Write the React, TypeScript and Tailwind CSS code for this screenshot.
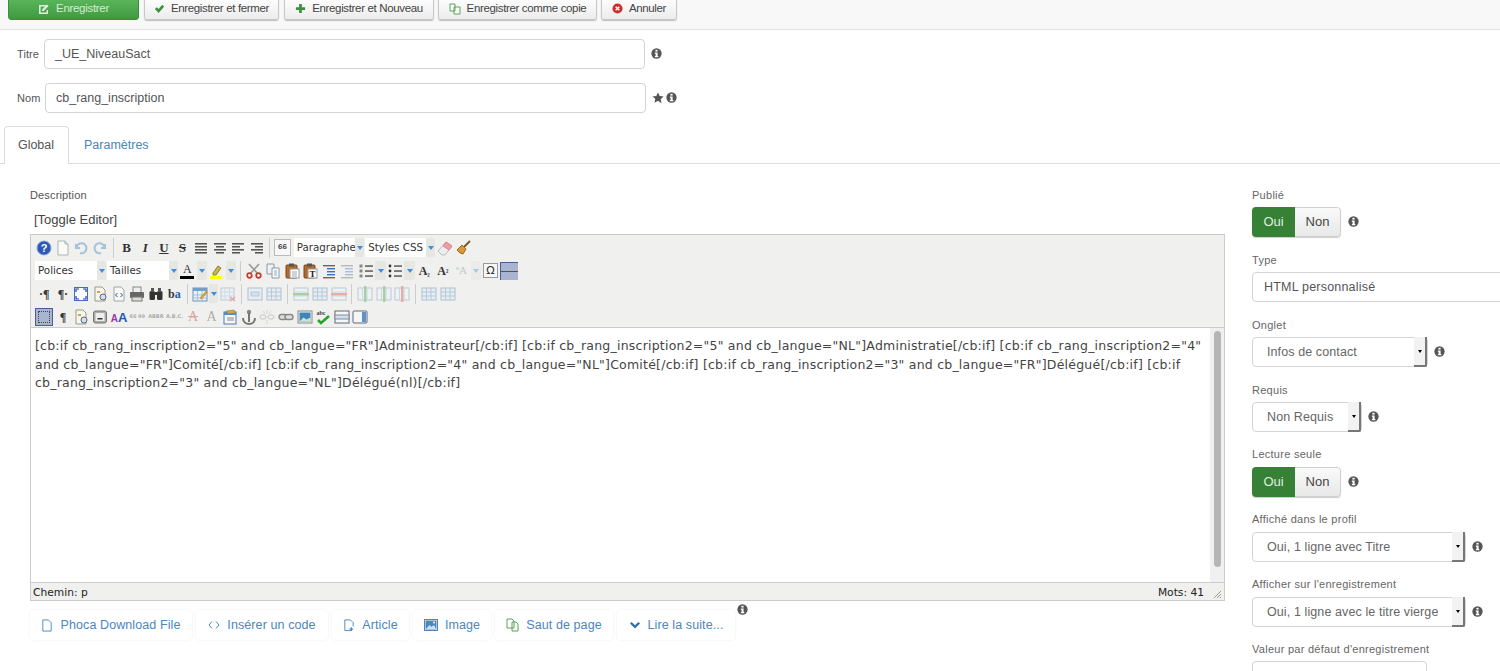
import React from "react";

const F = "[font-family:'Liberation_Sans',Arial,sans-serif]";

function Info({ className = "" }: { className?: string }) {
  return (
    <svg viewBox="0 0 12 12" className={`w-[11px] h-[11px] shrink-0 ${className}`}>
      <circle cx="6" cy="6" r="5.6" fill="#555" />
      <rect x="4.8" y="2" width="2.4" height="1.9" fill="#fff" />
      <path d="M4.2 5h3v3.6h.8V10H4.2V8.6H5V6.3h-.8z" fill="#fff" />
    </svg>
  );
}

function Btn({ icon, label, w }: { icon: React.ReactNode; label: string; w: string }) {
  return (
    <div className={`${w} h-[23px] flex items-center justify-center gap-[6px] rounded-[3px] border border-[#c8c8c8] bg-gradient-to-b from-[#fefefe] to-[#ececec] shadow-[0_1px_1px_#bbb] text-[11.5px] tracking-[-0.35px] text-[#444] whitespace-nowrap`}>
      {icon}
      <span>{label}</span>
    </div>
  );
}

function TextBox({ value, className }: { value: string; className: string }) {
  return (
    <div className={`${className} h-[30px] flex items-center rounded-[4px] border border-[#d4d4d4] bg-white pl-[10px] pt-[1px] text-[12.5px] text-[#555] whitespace-nowrap`}>
      {value}
    </div>
  );
}

function Label({ children }: { children: React.ReactNode }) {
  return <div className="h-[12px] leading-[12px] text-[11px] text-[#666] tracking-[0.27px] whitespace-nowrap">{children}</div>;
}

function Toggle({ on }: { on: string }) {
  return (
    <div className="flex items-center gap-[7px]">
      <div className="flex h-[30px] w-[89px] rounded-[4px] overflow-hidden text-[13px] shadow-[0_1px_1px_#ccc]">
        <div className="w-[43px] flex items-center justify-center bg-[#378137] text-[#dfeedf]">{on}</div>
        <div className="flex-1 flex items-center justify-center border border-l-0 border-[#d0d0d0] rounded-r-[4px] bg-gradient-to-b from-[#fafafa] to-[#e8e8e8] text-[#444]">Non</div>
      </div>
      <Info className="-mt-[1px]" />
    </div>
  );
}

function SelectBox({ value, w }: { value: string; w: string }) {
  return (
    <div className="flex items-center gap-[6px]">
      <div className={`${w} h-[30px] flex rounded-[4px] border border-[#d4d4d4] bg-white`}>
        <div className="flex-1 flex items-center pl-[14px] text-[12.5px] tracking-[0.1px] text-[#666] whitespace-nowrap overflow-hidden">{value}</div>
        <div className="w-[13px] -my-px flex items-center justify-center bg-[#f2f2f2] border-r-2 border-b-2 border-[#777] rounded-br-[2px]">
          <div className="w-0 h-0 border-x-[2.5px] border-x-transparent border-t-[3px] border-t-black" />
        </div>
      </div>
      <Info className="-mt-[1px]" />
    </div>
  );
}

function Ico({ k }: { k: string }) {
  const dim = "opacity-40";
  const line = (x: number, y: number, w: number, c = "#555") => <rect key={`${x}-${y}`} x={x} y={y} width={w} height="1" fill={c} />;
  switch (k) {
    case "help":
      return (
        <svg viewBox="0 0 16 16" className="w-[16px] h-[16px]">
          <circle cx="8" cy="8" r="7" fill="#2f58b5" stroke="#8aa4dc" />
          <text x="8" y="12" textAnchor="middle" fontSize="11" fontWeight="700" fill="#fff" fontFamily="Liberation Sans">?</text>
        </svg>
      );
    case "new":
      return <svg viewBox="0 0 16 16" className="w-[16px] h-[16px]"><path d="M3 1h7l3 3v11H3z" fill="#fbfbf6" stroke="#aab2b2" /><path d="M10 1v3h3" fill="#dde" stroke="#aab2b2" /></svg>;
    case "undo":
    case "redo":
      return (
        <svg viewBox="0 0 16 16" className={`w-[16px] h-[16px] ${dim} ${k === "redo" ? "-scale-x-100" : ""}`}>
          <path d="M3 4v4h4M3.5 8A5 5 0 1 1 7 13" fill="none" stroke="#3d80b5" strokeWidth="2" />
        </svg>
      );
    case "B":
    case "I":
    case "U":
    case "S":
      return (
        <span className={`w-[16px] text-center text-[13px] leading-none text-[#333] [font-family:'Liberation_Serif',serif] font-bold ${k === "I" ? "italic" : ""} ${k === "U" ? "underline" : ""} ${k === "S" ? "line-through" : ""}`}>{k}</span>
      );
    case "aj":
    case "ac":
    case "al":
    case "ar": {
      const xs: Record<string, number[][]> = {
        aj: [[2, 12], [2, 12], [2, 12], [2, 12]],
        ac: [[2, 12], [4, 8], [2, 12], [4, 8]],
        al: [[2, 12], [2, 8], [2, 12], [2, 8]],
        ar: [[2, 12], [6, 8], [2, 12], [6, 8]],
      };
      return <svg viewBox="0 0 16 16" className="w-[16px] h-[16px]">{xs[k].map((a, i) => <g key={i}>{line(a[0], 3 + i * 3, a[1])}{line(a[0], 4 + i * 3, a[1], "#999")}</g>)}</svg>;
    }
    case "quote":
      return <div className="w-[17px] h-[17px] flex items-center justify-center border border-[#bbb] bg-[#f8f8f8] text-[8px] font-bold leading-none text-[#444] pb-[2px] [font-family:'Liberation_Sans',sans-serif]">66</div>;
    case "eraser":
      return <svg viewBox="0 0 16 16" className="w-[16px] h-[16px]"><path d="M1 11l8-9 6 4-7 9H5z" fill="#eee" stroke="#bbb" /><path d="M9 2l6 4-3 4-6-4z" fill="#ef9ba8" stroke="#d88" /></svg>;
    case "broom":
      return <svg viewBox="0 0 16 16" className="w-[16px] h-[16px]"><path d="M9 7l6-6" stroke="#7b5a2c" strokeWidth="2" /><path d="M2 10l5-5 4 4-3 5-3-1z" fill="#d89a3a" stroke="#9c6c1e" /></svg>;
    case "color":
      return (
        <span className="w-[16px] flex flex-col items-center leading-none">
          <span className="text-[12px] [font-family:'Liberation_Serif',serif] text-[#333] h-[12px]">A</span>
          <span className="w-[14px] h-[3px] mt-[1px] bg-black" />
        </span>
      );
    case "hl":
      return <svg viewBox="0 0 16 16" className="w-[16px] h-[16px]"><path d="M5 10l5-7 3 2-5 7-3 0z" fill="#c7b948" stroke="#8b8330" /><rect x="2" y="13" width="12" height="3" fill="#ff0" /></svg>;
    case "cut":
      return <svg viewBox="0 0 16 16" className="w-[16px] h-[16px]"><path d="M3 1l9 10M13 1L4 11" stroke="#9a9a9a" strokeWidth="1.6" /><circle cx="3.5" cy="12.5" r="2.3" fill="none" stroke="#c43a30" strokeWidth="1.7" /><circle cx="12.5" cy="12.5" r="2.3" fill="none" stroke="#c43a30" strokeWidth="1.7" /></svg>;
    case "copy":
      return <svg viewBox="0 0 16 16" className="w-[16px] h-[16px]"><path d="M2 1h7v10H2z" fill="#eef2f4" stroke="#8b9aa3" /><path d="M7 5h7v10H7z" fill="#f8fafb" stroke="#8b9aa3" /><path d="M9 8h3M9 10h3M9 12h3" stroke="#9ab" /></svg>;
    case "paste":
    case "pastet":
      return (
        <svg viewBox="0 0 16 16" className="w-[16px] h-[16px]">
          <rect x="2" y="2" width="11" height="13" rx="1" fill="#b26a2c" stroke="#7c4519" />
          <rect x="5" y="0.5" width="5" height="3" fill="#555" />
          <rect x="6" y="6" width="9" height="9" fill="#fff" stroke="#999" />
          {k === "pastet" ? <text x="10.5" y="14" textAnchor="middle" fontSize="9" fontWeight="700" fill="#222" fontFamily="Liberation Serif">T</text> : <path d="M8 9h5M8 11h5M8 13h5" stroke="#9ab" />}
        </svg>
      );
    case "indent":
    case "outdent":
      return (
        <svg viewBox="0 0 16 16" className={`w-[16px] h-[16px] ${k === "outdent" ? dim : ""}`}>
          <rect x="2" y="2" width="12" height="1.4" fill="#666" />
          <rect x="6" y="5" width="8" height="1.4" fill="#3574c4" />
          <rect x="6" y="8" width="8" height="1.4" fill="#3574c4" />
          <rect x="6" y="11" width="8" height="1.4" fill="#3574c4" />
          <rect x="2" y="14" width="12" height="1.4" fill="#666" />
        </svg>
      );
    case "nl":
    case "ul":
      return (
        <svg viewBox="0 0 16 16" className="w-[16px] h-[16px]">
          {[3, 8, 13].map((y) => (
            <g key={y}>
              {k === "ul" ? <circle cx="3" cy={y} r="1.4" fill="#333" /> : <rect x="1.5" y={y - 1.5} width="3" height="3" fill="#888" />}
              <rect x="7" y={y - 0.6} width="8" height="1.3" fill="#444" />
            </g>
          ))}
        </svg>
      );
    case "sub":
    case "sup":
      return (
        <span className="w-[16px] text-center text-[12px] font-bold text-[#333] leading-none [font-family:'Liberation_Serif',serif]">
          A<span className="text-[8px] text-[#333]">{k === "sub" ? "₂" : "²"}</span>
        </span>
      );
    case "charmap":
      return <span className={`w-[16px] text-center text-[11px] leading-none text-[#789] ${dim} [font-family:'Liberation_Serif',serif]`}>ªA</span>;
    case "omega":
      return <div className="w-[15px] h-[15px] flex items-center justify-center border border-[#999] bg-[#f8f8f8] text-[11px] leading-none text-[#333]">Ω</div>;
    case "hr":
      return <div className="w-[18px] h-[18px] flex items-center bg-[#a9b4d0] border-l border-t border-[#4a5e95]"><div className="w-full h-px bg-[#555]" /></div>;
    case "ltr":
    case "rtl":
      return <span className="w-[16px] text-center text-[12px] font-bold text-[#333] leading-none [font-family:'Liberation_Serif',serif]">{k === "ltr" ? "·¶" : "¶·"}</span>;
    case "full":
      return <svg viewBox="0 0 16 16" className="w-[16px] h-[16px]"><rect x="1.5" y="1.5" width="13" height="13" fill="#fafcff" stroke="#3a6fc4" /><path d="M3 6V3h3M10 3h3v3M13 10v3h-3M6 13H3v-3" fill="none" stroke="#27408b" strokeWidth="1.2" /></svg>;
    case "prev":
      return <svg viewBox="0 0 16 16" className="w-[16px] h-[16px]"><path d="M3 1h7l3 3v11H3z" fill="#f6f6ee" stroke="#9a9a8a" /><rect x="5" y="5" width="3" height="2" fill="#d3a63a" /><circle cx="11" cy="11" r="3" fill="#cfe0ee" stroke="#667" /></svg>;
    case "code":
      return <svg viewBox="0 0 16 16" className="w-[16px] h-[16px]"><path d="M3 1h7l3 3v11H3z" fill="#f6f8f8" stroke="#9aa" /><path d="M6.5 7l-2 2 2 2M9.5 7l2 2-2 2" fill="none" stroke="#456" /></svg>;
    case "print":
      return <svg viewBox="0 0 16 16" className="w-[16px] h-[16px]"><rect x="4" y="1" width="8" height="6" fill="#eee" stroke="#888" /><rect x="1" y="6" width="14" height="6" rx="1" fill="#666" /><rect x="3" y="11" width="10" height="4" fill="#ddd" stroke="#777" /></svg>;
    case "find":
      return <svg viewBox="0 0 16 16" className="w-[16px] h-[16px]"><rect x="1.5" y="5" width="5.5" height="9" rx="1.5" fill="#333" /><rect x="9" y="5" width="5.5" height="9" rx="1.5" fill="#333" /><rect x="3" y="2" width="3" height="4" fill="#555" /><rect x="10" y="2" width="3" height="4" fill="#555" /><rect x="7" y="6" width="2" height="3" fill="#333" /></svg>;
    case "repl":
      return (
        <span className="w-[16px] text-center text-[12px] font-bold leading-none [font-family:'Liberation_Serif',serif] text-[#333]">
          <span className="text-[#333]">b</span><span className="text-[#245fa8]">a</span>
        </span>
      );
    case "table":
      return <svg viewBox="0 0 16 16" className="w-[16px] h-[16px]"><rect x="1" y="2" width="14" height="13" fill="#e8f0f8" stroke="#6d93b8" /><rect x="1" y="2" width="14" height="3" fill="#6fa0cc" /><path d="M1 9h14M1 12h14M5.5 5v10M10 5v10" stroke="#a7c0d8" /><path d="M8 12l6-7 1.5 1-6 7z" fill="#e6a832" stroke="#a87515" strokeWidth="0.5" /></svg>;
    case "tdel":
      return <svg viewBox="0 0 16 16" className={`w-[16px] h-[16px] ${dim}`}><rect x="1" y="2" width="13" height="12" fill="#e8f0f8" stroke="#6d93b8" /><path d="M1 6h13M1 10h13M5 2v12M9.5 2v12" stroke="#a7c0d8" /><path d="M10 11l5 4M15 11l-5 4" stroke="#d33" strokeWidth="1.5" /></svg>;
    case "cell":
    case "cell2":
    case "merge":
    case "t3":
      return <svg viewBox="0 0 16 16" className={`w-[16px] h-[16px] opacity-50`}><rect x="1" y="2" width="14" height="12" fill="#e0ecf6" stroke="#6d93b8" /><path d={k === "cell" ? "M4 6h8v4H4z" : "M1 6h14M1 10h14M5.5 2v12M10 2v12"} fill="#bcd3e6" stroke="#7fa3c2" /></svg>;
    case "rowg":
    case "rowr":
      return <svg viewBox="0 0 16 16" className="w-[16px] h-[16px] opacity-50"><rect x="1" y="2" width="14" height="12" fill="#eef4f8" stroke="#8aa8c0" /><path d="M1 6h14M1 10h14" stroke="#a7c0d8" /><rect x="0" y="7" width="16" height="2.4" fill={k === "rowg" ? "#62b05a" : "#dd6a5e"} /></svg>;
    case "colg":
    case "colr":
      return <svg viewBox="0 0 16 16" className="w-[16px] h-[16px] opacity-50"><rect x="1" y="2" width="14" height="12" fill="#eef4f8" stroke="#8aa8c0" /><path d="M5.5 2v12M10 2v12" stroke="#a7c0d8" /><rect x="7" y="0" width="2.4" height="16" fill={k === "colg" ? "#62b05a" : "#dd6a5e"} /></svg>;
    case "visual":
      return <div className="w-[18px] h-[18px] -ml-[1px] flex items-center justify-center bg-[#a9b4d0] border border-[#4a5e95]"><div className="w-[12px] h-[12px] border border-dotted border-[#444]" /></div>;
    case "pil":
      return <span className="w-[16px] text-center text-[12px] font-bold text-[#333] leading-none [font-family:'Liberation_Serif',serif]">¶</span>;
    case "box":
      return <svg viewBox="0 0 16 16" className="w-[16px] h-[16px]"><rect x="1.5" y="2" width="13" height="12" rx="2" fill="#aaa" stroke="#777" /><rect x="3.5" y="4" width="9" height="8" fill="#eee" /><rect x="5.5" y="9" width="5" height="1.5" fill="#333" /></svg>;
    case "AA":
      return (
        <span className="w-[16px] text-center leading-none font-bold [font-family:'Liberation_Sans',sans-serif]">
          <span className="text-[10px] text-[#a233a2]">A</span>
          <span className="text-[13px] text-[#1f57b8]">A</span>
        </span>
      );
    case "cite":
    case "abbr":
    case "acr":
      return <span className={`w-[17px] text-center text-[5px] font-bold leading-none ${dim} text-[#444]`}>{k === "cite" ? "66 99" : k === "abbr" ? "ABBR" : "A.B.C."}</span>;
    case "del":
    case "ins":
      return <span className={`w-[16px] text-center text-[14px] leading-none ${dim} [font-family:'Liberation_Serif',serif] ${k === "del" ? "line-through text-[#b33]" : "text-[#444]"}`}>A</span>;
    case "note":
      return <svg viewBox="0 0 16 16" className="w-[16px] h-[16px]"><rect x="2" y="3" width="12" height="12" fill="#f6f6f6" stroke="#4c7cac" /><rect x="2" y="3" width="12" height="3" fill="#4f8fc8" /><path d="M5 9h7M5 11h7" stroke="#888" /><path d="M4 2l8-1 2 3-8 1z" fill="#d8a04a" stroke="#a0712a" strokeWidth="0.5" /></svg>;
    case "attach":
      return <svg viewBox="0 0 16 16" className="w-[16px] h-[16px]"><circle cx="8" cy="3" r="2.2" fill="#888" /><rect x="7" y="4" width="2" height="9" fill="#777" /><path d="M2 9c0 4 3 6 6 6s6-2 6-6" fill="none" stroke="#777" strokeWidth="2" /></svg>;
    case "unl":
      return <svg viewBox="0 0 16 16" className={`w-[16px] h-[16px] ${dim}`}><rect x="1" y="6" width="6" height="4" rx="2" fill="none" stroke="#888" /><rect x="9" y="6" width="6" height="4" rx="2" fill="none" stroke="#888" /><path d="M8 1v4M4 2l2 3M12 2l-2 3M8 15v-4" stroke="#aaa" /></svg>;
    case "link":
      return <svg viewBox="0 0 16 16" className="w-[16px] h-[16px]"><rect x="1" y="5.5" width="8" height="5" rx="2.5" fill="#ddd" stroke="#888" strokeWidth="1.4" /><rect x="7" y="5.5" width="8" height="5" rx="2.5" fill="#ddd" stroke="#888" strokeWidth="1.4" /></svg>;
    case "img":
      return <svg viewBox="0 0 16 16" className="w-[16px] h-[16px]"><rect x="1" y="2" width="14" height="12" fill="#f4f4f4" stroke="#888" /><rect x="2.5" y="3.5" width="11" height="9" fill="#3f86b8" /><path d="M2.5 12.5l4-4 3 2 4-2v4z" fill="#c9e4d5" /></svg>;
    case "spell":
      return (
        <svg viewBox="0 0 16 16" className="w-[16px] h-[16px]">
          <text x="6" y="6" textAnchor="middle" fontSize="6" fill="#444" fontWeight="700" fontFamily="Liberation Serif">abc</text>
          <path d="M3 11l3 3 8-7" fill="none" stroke="#25a525" strokeWidth="2.6" />
        </svg>
      );
    case "win1":
      return <svg viewBox="0 0 16 16" className="w-[16px] h-[16px]"><rect x="1" y="2" width="14" height="12" fill="#f4f6f8" stroke="#667" /><rect x="1" y="6" width="14" height="4" fill="#cfdfee" stroke="#889" /></svg>;
    case "win2":
      return <svg viewBox="0 0 16 16" className="w-[16px] h-[16px]"><rect x="1" y="2" width="14" height="12" rx="1" fill="#f4f6f8" stroke="#667" /><rect x="10" y="3" width="4" height="10" fill="#5d93c8" /></svg>;
    default:
      return null;
  }
}

function T({ k }: { k: string }) {
  return <div className="w-[18.6px] h-[22px] flex items-center justify-center shrink-0"><Ico k={k} /></div>;
}
function Arrow({ dim = false, narrow = false }: { dim?: boolean; narrow?: boolean }) {
  return (
    <div className={`${narrow ? "w-[9px]" : "w-[10.5px]"} h-[19px] flex items-center justify-center shrink-0 bg-[#e6e6e3] rounded-r-[2px] ${dim ? "opacity-40" : ""}`}>
      <div className="w-0 h-0 border-x-[3.5px] border-x-transparent border-t-[4px] border-t-[#3f8fd8]" />
    </div>
  );
}
function Sep({ m = "mx-[4px]" }: { m?: string }) {
  return <div className={`w-px h-[20px] bg-[#ccc] ${m} shrink-0`} />;
}
function Sel({ label, w }: { label: string; w: string }) {
  return (
    <div className="flex items-center shrink-0">
      <div className={`${w} h-[19px] bg-white flex items-center pl-[3px] text-[10.3px] leading-none text-[#333] [font-family:'DejaVu_Sans',sans-serif] whitespace-nowrap`}>{label}</div>
      <Arrow narrow />
    </div>
  );
}
const Row = ({ children }: { children: React.ReactNode }) => <div className="flex items-center h-[23px] pl-[4px]">{children}</div>;

function Editor() {
  return (
    <div className="w-[1195px] h-[367px] mt-[7px] border border-[#ccc] flex flex-col bg-white">
      <div className="h-[93px] pt-[1px] bg-[#f0f0ee] border-b border-[#ccc] [font-family:'DejaVu_Sans',sans-serif]">
        <Row>
          <T k="help" /><T k="new" /><T k="undo" /><T k="redo" /><Sep m="mx-[3.5px]" />
          <T k="B" /><T k="I" /><T k="U" /><T k="S" /><T k="aj" /><T k="ac" /><T k="al" /><T k="ar" /><Sep m="mx-[3px]" />
          <T k="quote" /><div className="w-[2px]" />
          <Sel label="Paragraphe" w="w-[61.5px]" /><div className="w-[1px]" />
          <Sel label="Styles CSS" w="w-[61px]" />
          <T k="eraser" /><T k="broom" />
        </Row>
        <Row>
          <Sel label="Polices" w="w-[62px]" /><div className="w-[1px]" />
          <Sel label="Tailles" w="w-[62px]" />
          <T k="color" /><Arrow /><T k="hl" /><Arrow /><Sep />
          <T k="cut" /><T k="copy" /><T k="paste" /><T k="pastet" /><T k="indent" /><T k="outdent" />
          <T k="nl" /><Arrow /><T k="ul" /><Arrow />
          <T k="sub" /><T k="sup" /><T k="charmap" /><Arrow dim /><T k="omega" /><T k="hr" />
        </Row>
        <Row>
          <T k="ltr" /><T k="rtl" /><T k="full" /><T k="prev" /><T k="code" /><T k="print" /><T k="find" /><T k="repl" /><Sep m="mx-[3px]" />
          <T k="table" /><Arrow narrow /><T k="tdel" /><Sep />
          <T k="cell" /><T k="cell2" /><Sep />
          <T k="rowg" /><T k="cell2" /><T k="rowr" /><Sep m="mx-[3.5px]" />
          <T k="colg" /><T k="colg" /><T k="colr" /><Sep m="mx-[3.5px]" />
          <T k="merge" /><T k="t3" />
        </Row>
        <Row>
          <T k="visual" /><T k="pil" /><T k="prev" /><T k="box" /><T k="AA" /><T k="cite" /><T k="abbr" /><T k="acr" /><T k="del" /><T k="ins" /><T k="note" /><T k="attach" /><T k="unl" /><T k="link" /><T k="img" /><T k="spell" /><T k="win1" /><T k="win2" />
        </Row>
      </div>
      <div className="flex-1 flex min-h-0">
        <div className="flex-1 px-[4px] pt-[9px] text-[12.5px] tracking-[0.22px] leading-[18.5px] text-[#444] [font-family:'DejaVu_Sans',sans-serif]">
          [cb:if cb_rang_inscription2="5" and cb_langue="FR"]Administrateur[/cb:if] [cb:if cb_rang_inscription2="5" and cb_langue="NL"]Administratie[/cb:if] [cb:if cb_rang_inscription2="4" and cb_langue="FR"]Comité[/cb:if] [cb:if cb_rang_inscription2="4" and cb_langue="NL"]Comité[/cb:if] [cb:if cb_rang_inscription2="3" and cb_langue="FR"]Délégué[/cb:if] [cb:if cb_rang_inscription2="3" and cb_langue="NL"]Délégué(nl)[/cb:if]
        </div>
        <div className="w-[14px] bg-[#f0f0f0] flex justify-center pt-[3px]">
          <div className="w-[7px] h-[236px] rounded-full bg-[#b5b5b5]" />
        </div>
      </div>
      <div className="h-[18px] pt-[4px] bg-[#f0f0ee] border-t border-[#ccc] flex items-center pl-[2px] text-[10.7px] text-[#222] [font-family:'DejaVu_Sans',sans-serif]">
        <span className="flex-1">Chemin: p</span>
        <span className="mr-[8px]">Mots: 41</span>
        <svg viewBox="0 0 10 10" className="w-[10px] h-[10px] mr-[2px] self-end mb-[1px]"><path d="M9 2L2 9M9 5L5 9M9 8L8 9" stroke="#999" /></svg>
      </div>
    </div>
  );
}

const blue = "#4a86c0";

function LinkBtn({ icon, label, w }: { icon: React.ReactNode; label: string; w: string }) {
  return (
    <div className={`${w} h-[30px] flex items-center justify-center gap-[7px] rounded-[4px] bg-white shadow-[0_0_3px_#eee] text-[12.5px] tracking-[0.1px] text-[#4a86c0] whitespace-nowrap`}>
      {icon}
      <span>{label}</span>
    </div>
  );
}

export default function App() {
  return (
    <div className={`w-[1500px] h-[671px] overflow-hidden bg-white text-[#555] ${F}`}>
      <div className="h-[32px] bg-[#f8f8f8] border-b border-[#e4e4e4] flex pl-[8px] -mt-[3px] box-content">
        <div className="w-[131px] h-[23px] flex items-center justify-center gap-[6px] rounded-[3px] bg-gradient-to-b from-[#5cb85c] to-[#3f9a3f] border border-[#3b8f3b] text-[11.5px] tracking-[-0.3px] text-[#d4ecd4]">
          <svg viewBox="0 0 12 12" className="w-[12px] h-[12px]"><path d="M1 2h7v1.6H2.6v6h6V7H10v4H1z" fill="#dff0df" /><path d="M4 6.5l5-5 1.6 1.6-5 5H4z" fill="#dff0df" /></svg>
          <span>Enregistrer</span>
        </div>
        <div className="flex gap-[5px] ml-[5px]">
          <Btn w="w-[135px]" label="Enregistrer et fermer" icon={<svg viewBox="0 0 12 12" className="w-[11px] h-[11px]"><path d="M1 6.5l2-2 2 2 4-4.5 2 2-6 7z" fill="#3f8f3f" /></svg>} />
          <Btn w="w-[150px]" label="Enregistrer et Nouveau" icon={<svg viewBox="0 0 12 12" className="w-[11px] h-[11px]"><path d="M4.5 1h3v3.5H11v3H7.5V11h-3V7.5H1v-3h3.5z" fill="#3f8f3f" /></svg>} />
        </div>
        <div className="flex gap-[4px] ml-[4px]">
          <Btn w="w-[159px]" label="Enregistrer comme copie" icon={<svg viewBox="0 0 12 12" className="w-[12px] h-[12px]"><path d="M1 1h5v7H1zM5 4h6v7H5z" fill="#fff" stroke="#56a556" /></svg>} />
          <Btn w="w-[76px]" label="Annuler" icon={<svg viewBox="0 0 12 12" className="w-[11px] h-[11px]"><circle cx="6" cy="6" r="5.5" fill="#c9302c" /><path d="M4 4l4 4M8 4l-4 4" stroke="#fff" strokeWidth="1.6" /></svg>} />
        </div>
      </div>

      <div className="flex items-center h-[30px] mt-[9px] pl-[17px]">
        <span className="w-[27px] text-[11px] tracking-[0.1px]">Titre</span>
        <TextBox value="_UE_NiveauSact" className="w-[601px]" />
        <Info className="ml-[6px] -mt-[1px]" />
      </div>
      <div className="flex items-center h-[30px] mt-[14px] pl-[17px]">
        <span className="w-[28px] text-[11px] tracking-[0.1px]">Nom</span>
        <TextBox value="cb_rang_inscription" className="w-[601px]" />
        <svg viewBox="0 0 12 12" className="w-[12px] h-[12px] ml-[6px] -mt-[1px]"><path d="M6 .5l1.7 3.6 3.9.5-2.9 2.7.8 3.9L6 8.8l-3.5 1.9.8-3.9L.4 4.6l3.9-.5z" fill="#555" /></svg>
        <Info className="ml-[2px] -mt-[1px]" />
      </div>

      <div className="flex h-[38px] mt-[13px] pl-[4px] border-b border-[#ddd]">
        <div className="w-[65px] h-[38px] flex items-center justify-center pr-[1px] bg-white border border-b-0 border-[#ddd] rounded-t-[4px] text-[12.5px] text-[#555]">Global</div>
        <div className="ml-[15px] flex items-center pt-[1px] text-[12.5px] text-[#4a86c0]">Paramètres</div>
      </div>

      <div className="flex">
        <div className="w-[1222px] pl-[30px] shrink-0">
          <div className="mt-[25px] text-[11px] leading-[12px] tracking-[0.15px]">Description</div>
          <div className="mt-[12px] pl-[4px] text-[13px] leading-[14px] text-[#444]">[Toggle Editor]</div>
          <Editor />
          <div className="flex gap-[4px] mt-[9px] relative">
            <LinkBtn w="w-[162px]" label="Phoca Download File" icon={<svg viewBox="0 0 12 14" className="w-[12px] h-[13px]"><path d="M1.5 1h6l3 3v9h-9z" fill="none" stroke={blue} /></svg>} />
            <LinkBtn w="w-[132px]" label="Insérer un code" icon={<svg viewBox="0 0 12 12" className="w-[12px] h-[12px]"><path d="M4 2.5L1 6l3 3.5M8 2.5L11 6l-3 3.5" fill="none" stroke={blue} /></svg>} />
            <LinkBtn w="w-[77px]" label="Article" icon={<svg viewBox="0 0 12 14" className="w-[12px] h-[13px]"><path d="M8 12.5H1.5V1h6l3 3v4" fill="none" stroke={blue} /><path d="M8.5 9v4M6.5 11h4" stroke={blue} strokeWidth="1.3" /></svg>} />
            <LinkBtn w="w-[78px]" label="Image" icon={<svg viewBox="0 0 14 12" className="w-[14px] h-[12px]"><rect x="0.5" y="0.5" width="13" height="11" fill="#fff" stroke={blue} /><rect x="1.5" y="1.5" width="11" height="9" fill={blue} /><path d="M2 10l3.5-4 2 2 2.5-2 2 4z" fill="#cfe0f0" /><circle cx="10" cy="3.5" r="1" fill="#fff" /></svg>} />
            <LinkBtn w="w-[118px]" label="Saut de page" icon={<svg viewBox="0 0 13 14" className="w-[13px] h-[14px]"><path d="M1 1h5l2 2v7H1zM6 4h4l2 2v7H6z" fill="#fff" stroke="#56a556" /></svg>} />
            <LinkBtn w="w-[118px]" label="Lire la suite..." icon={<svg viewBox="0 0 12 10" className="w-[12px] h-[10px]"><path d="M1 3.5l1.6-1.6L6 5.3l3.4-3.4L11 3.5l-5 5z" fill="#2f6fb0" /></svg>} />
            <Info className="absolute left-[707px] -top-[6px]" />
          </div>
        </div>

        <div className="w-[300px] pl-[30px] shrink-0">
          <div className="mt-[25px]"><Label>Publié</Label></div>
          <div className="mt-[6px]"><Toggle on="Oui" /></div>
          <div className="mt-[17px]"><Label>Type</Label></div>
          <div className="mt-[6px]"><TextBox value="HTML personnalisé" className="w-[260px] pl-[11px] text-[#444] tracking-[0.2px]" /></div>
          <div className="mt-[17px]"><Label>Onglet</Label></div>
          <div className="mt-[6px]"><SelectBox value="Infos de contact" w="w-[176px]" /></div>
          <div className="mt-[17px]"><Label>Requis</Label></div>
          <div className="mt-[6px]"><SelectBox value="Non Requis" w="w-[110px]" /></div>
          <div className="mt-[16px]"><Label>Lecture seule</Label></div>
          <div className="mt-[7px]"><Toggle on="Oui" /></div>
          <div className="mt-[16px]"><Label>Affiché dans le profil</Label></div>
          <div className="mt-[7px]"><SelectBox value="Oui, 1 ligne avec Titre" w="w-[214px]" /></div>
          <div className="mt-[16px]"><Label>Afficher sur l'enregistrement</Label></div>
          <div className="mt-[7px]"><SelectBox value="Oui, 1 ligne avec le titre vierge" w="w-[214px]" /></div>
          <div className="mt-[16px]"><Label>Valeur par défaut d'enregistrement</Label></div>
          <div className="mt-[6px] flex items-center gap-[7px]"><TextBox value="" className="w-[175px]" /><Info /></div>
        </div>
      </div>
    </div>
  );
}
